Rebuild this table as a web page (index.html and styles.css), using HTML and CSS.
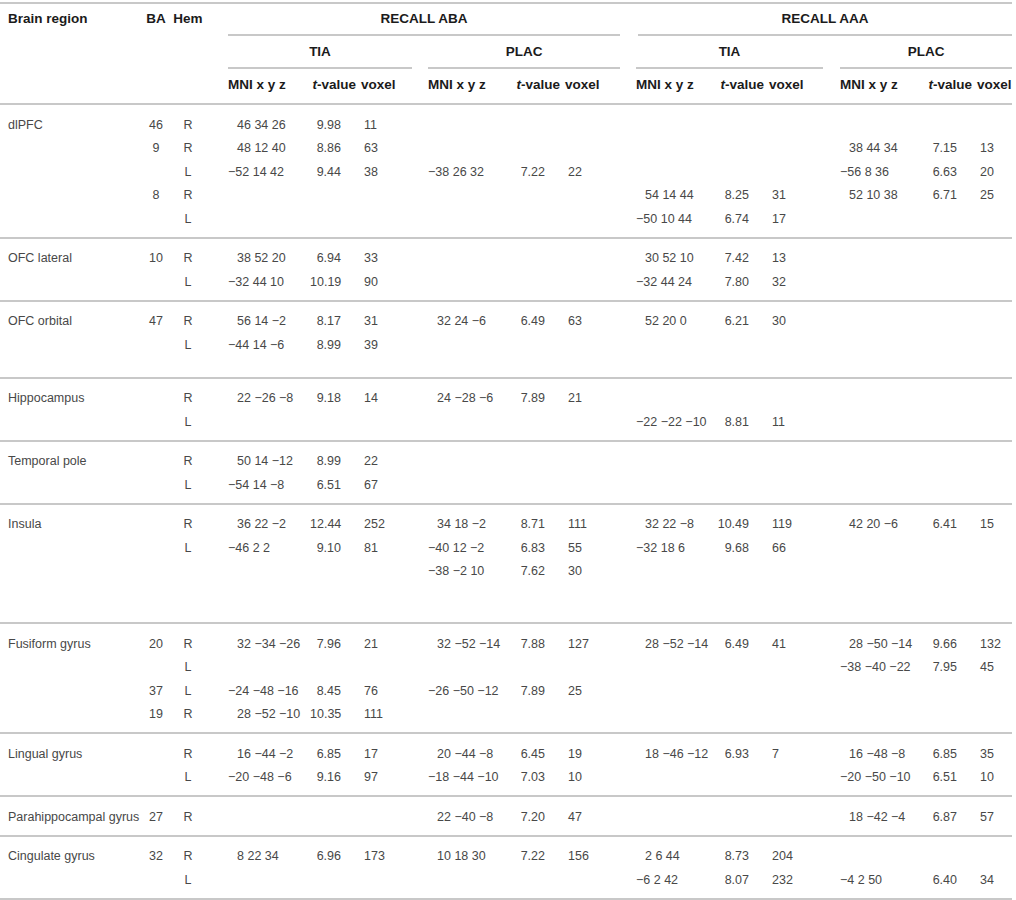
FILE: index.html
```html
<!DOCTYPE html>
<html>
<head>
  <title>Recall activations</title>
  <link rel="stylesheet" href="styles.css">
</head>
<body>

<table class="tbl">
  <colgroup>
    <col style="width:140px"><col style="width:32px"><col style="width:32px">
    <col style="width:106px"><col style="width:51px"><col style="width:51px">
    <col style="width:98px"><col style="width:55px"><col style="width:55px">
    <col style="width:94px"><col style="width:55px"><col style="width:54px">
    <col style="width:99px"><col style="width:55px"><col style="width:35px">
  </colgroup>
  <thead>
    <tr>
      <th rowspan="3" class="h-region">Brain region</th>
      <th rowspan="3" class="h-mid">BA</th>
      <th rowspan="3" class="h-mid">Hem</th>
      <th colspan="6"><div class="span span-aba">RECALL ABA</div></th>
      <th colspan="6"><div class="span span-aaa">RECALL AAA</div></th>
    </tr>
    <tr>
      <th colspan="3"><div class="sub b1">TIA</div></th>
      <th colspan="3"><div class="sub b2">PLAC</div></th>
      <th colspan="3"><div class="sub b3">TIA</div></th>
      <th colspan="3"><div class="sub b4">PLAC</div></th>
    </tr>
    <tr class="cols">
      <th class="mni b1">MNI x y z</th><th class="tv"><i>t</i>-value</th><th class="vx">voxel</th>
      <th class="mni b2">MNI x y z</th><th class="tv"><i>t</i>-value</th><th class="vx">voxel</th>
      <th class="mni b3">MNI x y z</th><th class="tv"><i>t</i>-value</th><th class="vx">voxel</th>
      <th class="mni b4">MNI x y z</th><th class="tv"><i>t</i>-value</th><th class="vx">voxel</th>
    </tr>
  </thead>

  <!-- dlPFC -->
  <tbody>
    <tr class="first">
      <td>dlPFC</td><td>46</td><td>R</td>
      <td class="p">46 34 26</td><td>9.98</td><td>11</td>
      <td></td><td></td><td></td>
      <td></td><td></td><td></td>
      <td></td><td></td><td></td>
    </tr>
    <tr>
      <td></td><td>9</td><td>R</td>
      <td class="p">48 12 40</td><td>8.86</td><td>63</td>
      <td></td><td></td><td></td>
      <td></td><td></td><td></td>
      <td class="p">38 44 34</td><td>7.15</td><td>13</td>
    </tr>
    <tr>
      <td></td><td></td><td>L</td>
      <td>−52 14 42</td><td>9.44</td><td>38</td>
      <td>−38 26 32</td><td>7.22</td><td>22</td>
      <td></td><td></td><td></td>
      <td>−56 8 36</td><td>6.63</td><td>20</td>
    </tr>
    <tr>
      <td></td><td>8</td><td>R</td>
      <td></td><td></td><td></td>
      <td></td><td></td><td></td>
      <td class="p">54 14 44</td><td>8.25</td><td>31</td>
      <td class="p">52 10 38</td><td>6.71</td><td>25</td>
    </tr>
    <tr class="last">
      <td></td><td></td><td>L</td>
      <td></td><td></td><td></td>
      <td></td><td></td><td></td>
      <td>−50 10 44</td><td>6.74</td><td>17</td>
      <td></td><td></td><td></td>
    </tr>
  </tbody>

  <!-- OFC lateral -->
  <tbody>
    <tr class="first">
      <td>OFC lateral</td><td>10</td><td>R</td>
      <td class="p">38 52 20</td><td>6.94</td><td>33</td>
      <td></td><td></td><td></td>
      <td class="p">30 52 10</td><td>7.42</td><td>13</td>
      <td></td><td></td><td></td>
    </tr>
    <tr class="last">
      <td></td><td></td><td>L</td>
      <td>−32 44 10</td><td>10.19</td><td>90</td>
      <td></td><td></td><td></td>
      <td>−32 44 24</td><td>7.80</td><td>32</td>
      <td></td><td></td><td></td>
    </tr>
  </tbody>

  <!-- OFC orbital -->
  <tbody>
    <tr class="first">
      <td>OFC orbital</td><td>47</td><td>R</td>
      <td class="p">56 14 −2</td><td>8.17</td><td>31</td>
      <td class="p">32 24 −6</td><td>6.49</td><td>63</td>
      <td class="p">52 20 0</td><td>6.21</td><td>30</td>
      <td></td><td></td><td></td>
    </tr>
    <tr class="last gap-s">
      <td></td><td></td><td>L</td>
      <td>−44 14 −6</td><td>8.99</td><td>39</td>
      <td></td><td></td><td></td>
      <td></td><td></td><td></td>
      <td></td><td></td><td></td>
    </tr>
  </tbody>

  <!-- Hippocampus -->
  <tbody>
    <tr class="first">
      <td>Hippocampus</td><td></td><td>R</td>
      <td class="p">22 −26 −8</td><td>9.18</td><td>14</td>
      <td class="p">24 −28 −6</td><td>7.89</td><td>21</td>
      <td></td><td></td><td></td>
      <td></td><td></td><td></td>
    </tr>
    <tr class="last">
      <td></td><td></td><td>L</td>
      <td></td><td></td><td></td>
      <td></td><td></td><td></td>
      <td>−22 −22 −10</td><td>8.81</td><td>11</td>
      <td></td><td></td><td></td>
    </tr>
  </tbody>

  <!-- Temporal pole -->
  <tbody>
    <tr class="first">
      <td>Temporal pole</td><td></td><td>R</td>
      <td class="p">50 14 −12</td><td>8.99</td><td>22</td>
      <td></td><td></td><td></td>
      <td></td><td></td><td></td>
      <td></td><td></td><td></td>
    </tr>
    <tr class="last">
      <td></td><td></td><td>L</td>
      <td>−54 14 −8</td><td>6.51</td><td>67</td>
      <td></td><td></td><td></td>
      <td></td><td></td><td></td>
      <td></td><td></td><td></td>
    </tr>
  </tbody>

  <!-- Insula -->
  <tbody>
    <tr class="first">
      <td>Insula</td><td></td><td>R</td>
      <td class="p">36 22 −2</td><td>12.44</td><td>252</td>
      <td class="p">34 18 −2</td><td>8.71</td><td>111</td>
      <td class="p">32 22 −8</td><td>10.49</td><td>119</td>
      <td class="p">42 20 −6</td><td>6.41</td><td>15</td>
    </tr>
    <tr>
      <td></td><td></td><td>L</td>
      <td>−46 2 2</td><td>9.10</td><td>81</td>
      <td>−40 12 −2</td><td>6.83</td><td>55</td>
      <td>−32 18 6</td><td>9.68</td><td>66</td>
      <td></td><td></td><td></td>
    </tr>
    <tr class="last gap-l">
      <td></td><td></td><td></td>
      <td></td><td></td><td></td>
      <td>−38 −2 10</td><td>7.62</td><td>30</td>
      <td></td><td></td><td></td>
      <td></td><td></td><td></td>
    </tr>
  </tbody>

  <!-- Fusiform gyrus -->
  <tbody>
    <tr class="first">
      <td>Fusiform gyrus</td><td>20</td><td>R</td>
      <td class="p">32 −34 −26</td><td>7.96</td><td>21</td>
      <td class="p">32 −52 −14</td><td>7.88</td><td>127</td>
      <td class="p">28 −52 −14</td><td>6.49</td><td>41</td>
      <td class="p">28 −50 −14</td><td>9.66</td><td>132</td>
    </tr>
    <tr>
      <td></td><td></td><td>L</td>
      <td></td><td></td><td></td>
      <td></td><td></td><td></td>
      <td></td><td></td><td></td>
      <td>−38 −40 −22</td><td>7.95</td><td>45</td>
    </tr>
    <tr>
      <td></td><td>37</td><td>L</td>
      <td>−24 −48 −16</td><td>8.45</td><td>76</td>
      <td>−26 −50 −12</td><td>7.89</td><td>25</td>
      <td></td><td></td><td></td>
      <td></td><td></td><td></td>
    </tr>
    <tr class="last">
      <td></td><td>19</td><td>R</td>
      <td class="p">28 −52 −10</td><td>10.35</td><td>111</td>
      <td></td><td></td><td></td>
      <td></td><td></td><td></td>
      <td></td><td></td><td></td>
    </tr>
  </tbody>

  <!-- Lingual gyrus -->
  <tbody>
    <tr class="first">
      <td>Lingual gyrus</td><td></td><td>R</td>
      <td class="p">16 −44 −2</td><td>6.85</td><td>17</td>
      <td class="p">20 −44 −8</td><td>6.45</td><td>19</td>
      <td class="p">18 −46 −12</td><td>6.93</td><td>7</td>
      <td class="p">16 −48 −8</td><td>6.85</td><td>35</td>
    </tr>
    <tr class="last">
      <td></td><td></td><td>L</td>
      <td>−20 −48 −6</td><td>9.16</td><td>97</td>
      <td>−18 −44 −10</td><td>7.03</td><td>10</td>
      <td></td><td></td><td></td>
      <td>−20 −50 −10</td><td>6.51</td><td>10</td>
    </tr>
  </tbody>

  <!-- Parahippocampal gyrus -->
  <tbody>
    <tr class="first last">
      <td>Parahippocampal gyrus</td><td>27</td><td>R</td>
      <td></td><td></td><td></td>
      <td class="p">22 −40 −8</td><td>7.20</td><td>47</td>
      <td></td><td></td><td></td>
      <td class="p">18 −42 −4</td><td>6.87</td><td>57</td>
    </tr>
  </tbody>

  <!-- Cingulate gyrus -->
  <tbody>
    <tr class="first">
      <td>Cingulate gyrus</td><td>32</td><td>R</td>
      <td class="p">8 22 34</td><td>6.96</td><td>173</td>
      <td class="p">10 18 30</td><td>7.22</td><td>156</td>
      <td class="p">2 6 44</td><td>8.73</td><td>204</td>
      <td></td><td></td><td></td>
    </tr>
    <tr class="last">
      <td></td><td></td><td>L</td>
      <td></td><td></td><td></td>
      <td></td><td></td><td></td>
      <td>−6 2 42</td><td>8.07</td><td>232</td>
      <td>−4 2 50</td><td>6.40</td><td>34</td>
    </tr>
  </tbody>
</table>

</body>
</html>
```

FILE: styles.css
```css
*{
  box-sizing: border-box;
}

body{
  margin: 0;
  background-color: white;
}

.tbl{
  width: 1012px;
  margin-top: 2px;
  table-layout: fixed;
  border-collapse: separate;
  border-spacing: 0;
  border-top: 2px solid #c8c8c8;
  border-bottom: 2px solid #c8c8c8;
  font-family: "Liberation Sans", Arial, sans-serif;
  font-size: 12.5px;
  color: #484848;
}

/* header */

.tbl th{
  padding: 0;
  font-size: 13.5px;
  font-weight: bold;
  color: #1b1b1b;
  line-height: 16px;
  white-space: nowrap;
  text-align: left;
  vertical-align: top;
}

.tbl th.h-region{
  padding: 7px 0 0 8px;
}

.tbl th.h-mid{
  padding-top: 7px;
  text-align: center;
}

.span{
  padding: 7px 0;
  border-bottom: 2px solid #c8c8c8;
  text-align: center;
}

.span-aba{ margin-left: 24px; }
.span-aaa{ margin-left: 18px; }

.sub{
  padding: 8px 0 7px;
  border-bottom: 2px solid #c8c8c8;
  text-align: center;
}

.sub.b1{ margin-left: 24px; }
.sub.b2{ margin-left: 16px; }
.sub.b3{ margin-left: 16px; }
.sub.b4{ margin-left: 17px; }

.cols th{
  padding-top: 8px;
  padding-bottom: 10px;
}

.cols th.mni.b1{ padding-left: 24px; }
.cols th.mni.b2{ padding-left: 16px; }
.cols th.mni.b3{ padding-left: 16px; }
.cols th.mni.b4{ padding-left: 17px; }

.cols th.tv{
  text-align: right;
  padding-right: 5px;
}

.cols th i{
  font-style: italic;
}

/* body */

.tbl td{
  padding: 0;
  line-height: 23.5px;
  white-space: nowrap;
  vertical-align: top;
}

.tbl tr.first td{
  border-top: 2px solid #c8c8c8;
  padding-top: 8.5px;
}

.tbl tr.last td{
  padding-bottom: 5.5px;
}

.tbl tr.gap-s td{
  padding-bottom: 19.5px;
}

.tbl tr.gap-l td{
  padding-bottom: 38.5px;
}

/* region, BA, Hem */
.tbl td:nth-child(1){ padding-left: 8px; }
.tbl td:nth-child(2),
.tbl td:nth-child(3){ text-align: center; }

/* MNI coordinates */
.tbl td:nth-child(4){ padding-left: 24px; }
.tbl td:nth-child(7),
.tbl td:nth-child(10){ padding-left: 16px; }
.tbl td:nth-child(13){ padding-left: 17px; }

.tbl td:nth-child(4).p{ padding-left: 33px; }
.tbl td:nth-child(7).p,
.tbl td:nth-child(10).p{ padding-left: 25px; }
.tbl td:nth-child(13).p{ padding-left: 26px; }

/* t-values */
.tbl td:nth-child(5),
.tbl td:nth-child(8),
.tbl td:nth-child(11),
.tbl td:nth-child(14){
  text-align: right;
  padding-right: 20px;
}

/* voxels */
.tbl td:nth-child(6),
.tbl td:nth-child(9),
.tbl td:nth-child(12),
.tbl td:nth-child(15){
  padding-left: 3px;
}
```
